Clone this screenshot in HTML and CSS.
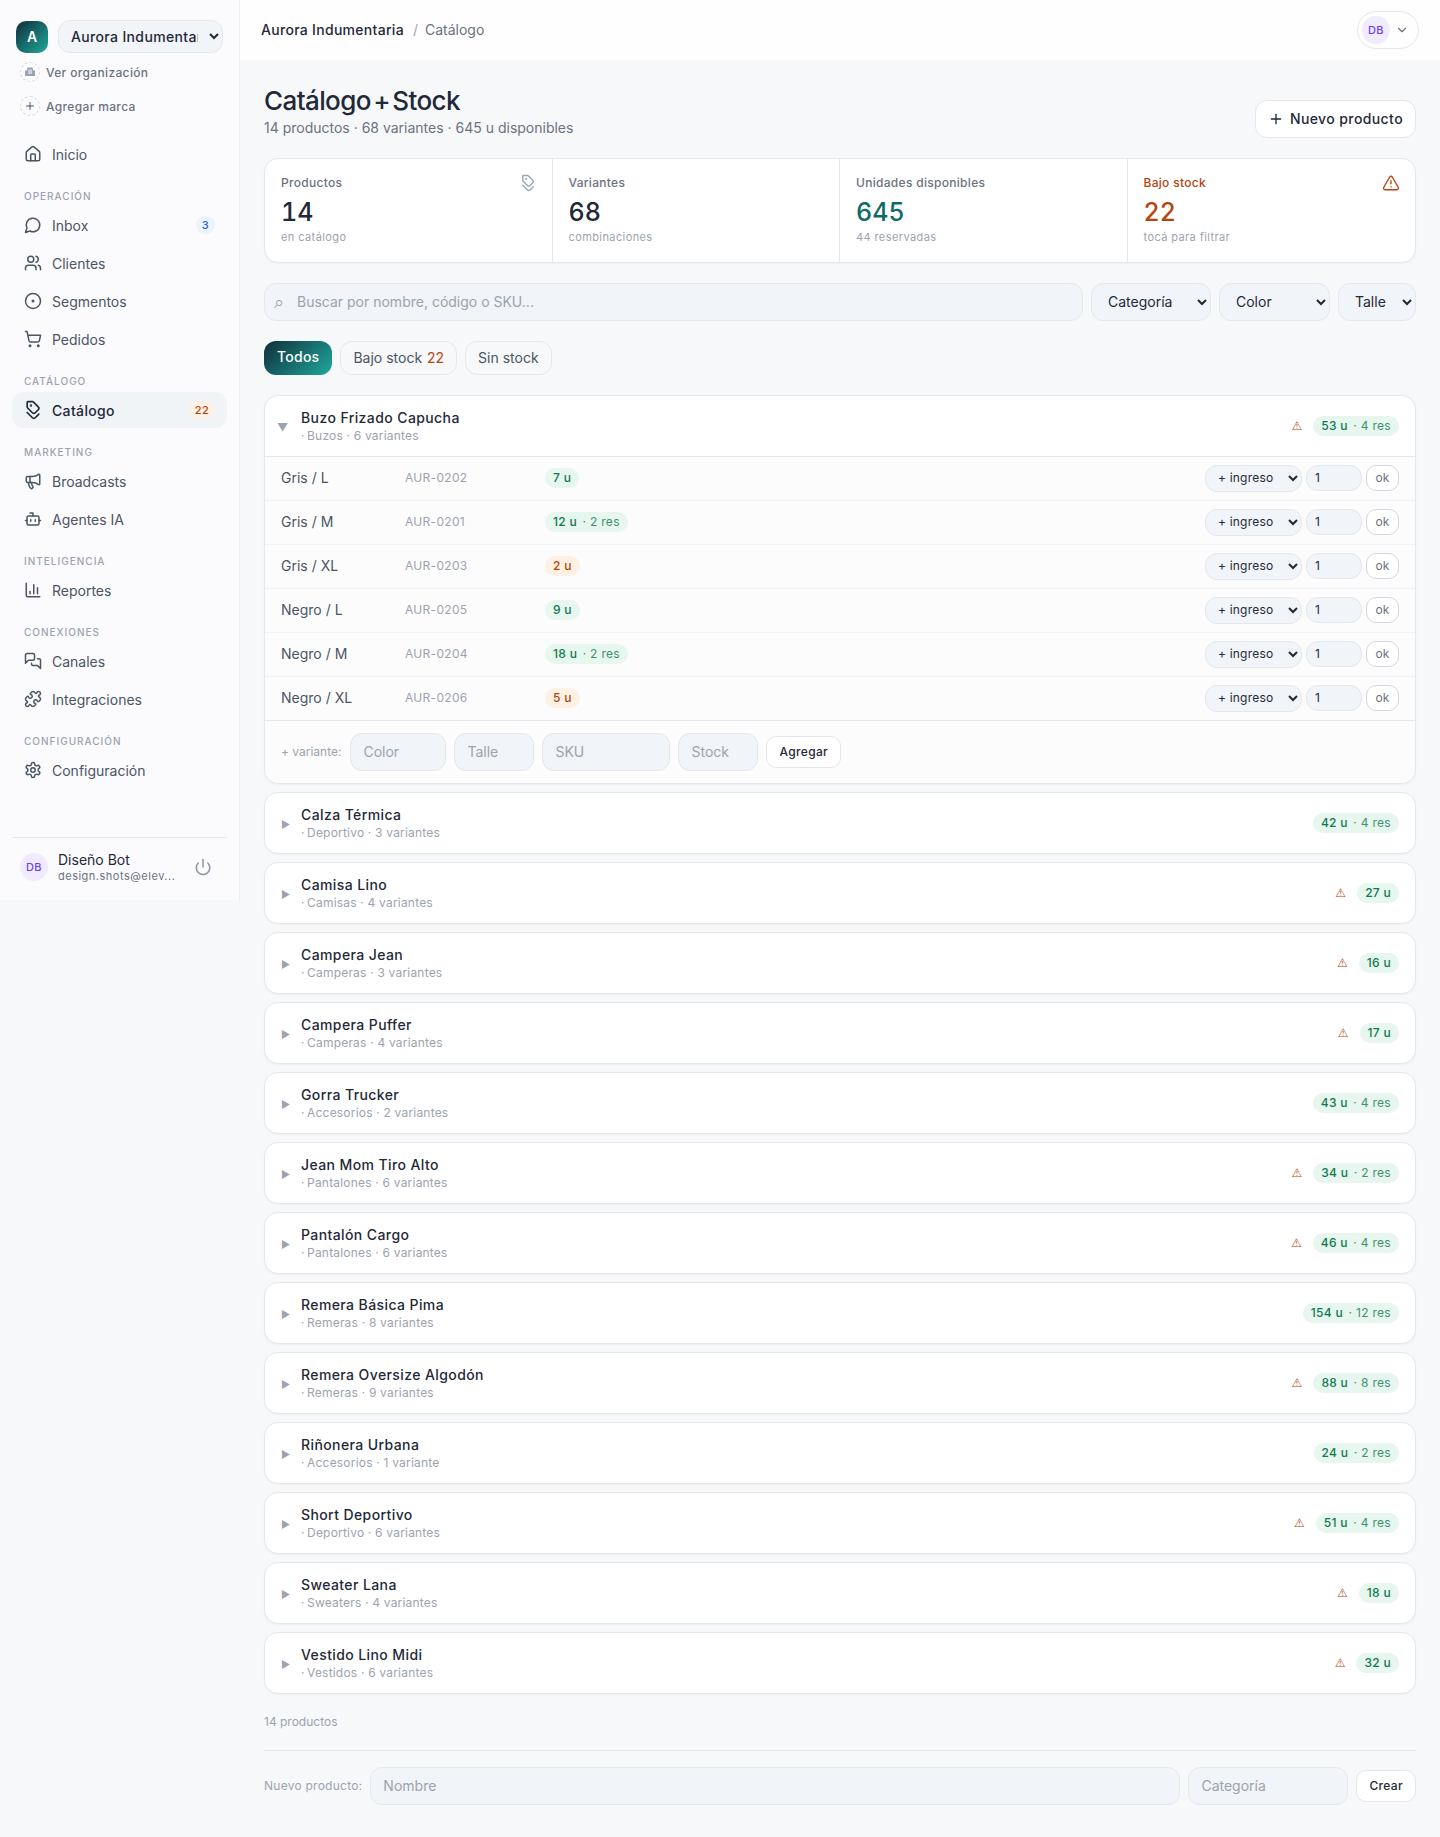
FILE: index.html
```html
<!DOCTYPE html>
<html lang="es">

<head>
    <meta charset="UTF-8">
    <meta name="viewport" content="width=device-width, initial-scale=1.0">
    <title>Catálogo + Stock</title>
    <link rel="stylesheet" href="styles.css">
</head>

<body>

    <svg class="sprite" width="0" height="0">
        <symbol id="i-home" viewBox="0 0 24 24"><path d="M15 21v-8a1 1 0 0 0-1-1h-4a1 1 0 0 0-1 1v8"/><path d="M3 10a2 2 0 0 1 .709-1.528l7-5.999a2 2 0 0 1 2.582 0l7 5.999A2 2 0 0 1 21 10v9a2 2 0 0 1-2 2H5a2 2 0 0 1-2-2z"/></symbol>
        <symbol id="i-inbox" viewBox="0 0 24 24"><path d="M7.9 20A9 9 0 1 0 4 16.1L2 22Z"/></symbol>
        <symbol id="i-users" viewBox="0 0 24 24"><path d="M16 21v-2a4 4 0 0 0-4-4H6a4 4 0 0 0-4 4v2"/><circle cx="9" cy="7" r="4"/><path d="M22 21v-2a4 4 0 0 0-3-3.87"/><path d="M16 3.13a4 4 0 0 1 0 7.75"/></symbol>
        <symbol id="i-dot" viewBox="0 0 24 24"><circle cx="12" cy="12" r="10"/><circle cx="12" cy="12" r="1"/></symbol>
        <symbol id="i-cart" viewBox="0 0 24 24"><circle cx="8" cy="21" r="1"/><circle cx="19" cy="21" r="1"/><path d="M2.05 2.05h2l2.66 12.42a2 2 0 0 0 2 1.58h9.78a2 2 0 0 0 1.95-1.57l1.65-7.43H5.12"/></symbol>
        <symbol id="i-tags" viewBox="0 0 24 24"><g transform="matrix(0 1 1 0 0 0)"><path d="m15 5 6.3 6.3a2.4 2.4 0 0 1 0 3.4L17 19"/><path d="M9.586 5.586A2 2 0 0 0 8.172 5H3a1 1 0 0 0-1 1v5.172a2 2 0 0 0 .586 1.414L8.29 18.29a2.426 2.426 0 0 0 3.42 0l3.58-3.58a2.426 2.426 0 0 0 0-3.42z"/><circle cx="6.5" cy="9.5" r=".5"/></g></symbol>
        <symbol id="i-mega" viewBox="0 0 24 24"><path d="M11 6a13 13 0 0 0 8.4-2.8A1 1 0 0 1 21 4v12a1 1 0 0 1-1.6.8A13 13 0 0 0 11 14H5a2 2 0 0 1-2-2V8a2 2 0 0 1 2-2z"/><path d="M6 14a12 12 0 0 0 2.4 7.2 2 2 0 0 0 3.2-2.4A8 8 0 0 1 10 14"/><path d="M8 6v8"/></symbol>
        <symbol id="i-bot" viewBox="0 0 24 24"><path d="M12 8V4H8"/><rect width="16" height="12" x="4" y="8" rx="2"/><path d="M2 14h2"/><path d="M20 14h2"/><path d="M15 13v2"/><path d="M9 13v2"/></symbol>
        <symbol id="i-chart" viewBox="0 0 24 24"><path d="M3 3v16a2 2 0 0 0 2 2h16"/><path d="M18 17V9"/><path d="M13 17V5"/><path d="M8 17v-3"/></symbol>
        <symbol id="i-chat" viewBox="0 0 24 24"><path d="M14 9a2 2 0 0 1-2 2H6l-4 4V4a2 2 0 0 1 2-2h8a2 2 0 0 1 2 2z"/><path d="M18 9h2a2 2 0 0 1 2 2v11l-4-4h-6a2 2 0 0 1-2-2v-1"/></symbol>
        <symbol id="i-puzzle" viewBox="0 0 24 24"><path d="M15.39 4.39a1 1 0 0 0 1.68-.474 2.5 2.5 0 1 1 3.014 3.015 1 1 0 0 0-.474 1.68l1.683 1.682a2.414 2.414 0 0 1 0 3.414L19.61 15.39a1 1 0 0 1-1.68-.474 2.5 2.5 0 1 0-3.014 3.015 1 1 0 0 1 .474 1.68l-1.683 1.682a2.414 2.414 0 0 1-3.414 0L8.61 19.61a1 1 0 0 0-1.68.474 2.5 2.5 0 1 1-3.014-3.015 1 1 0 0 0 .474-1.68l-1.683-1.682a2.414 2.414 0 0 1 0-3.414L4.39 8.61a1 1 0 0 1 1.68.474 2.5 2.5 0 1 0 3.014-3.015 1 1 0 0 1-.474-1.68l1.683-1.682a2.414 2.414 0 0 1 3.414 0z"/></symbol>
        <symbol id="i-gear" viewBox="0 0 24 24"><path d="M12.22 2h-.44a2 2 0 0 0-2 2v.18a2 2 0 0 1-1 1.73l-.43.25a2 2 0 0 1-2 0l-.15-.08a2 2 0 0 0-2.73.73l-.22.38a2 2 0 0 0 .73 2.73l.15.1a2 2 0 0 1 1 1.72v.51a2 2 0 0 1-1 1.74l-.15.09a2 2 0 0 0-.73 2.73l.22.38a2 2 0 0 0 2.73.73l.15-.08a2 2 0 0 1 2 0l.43.25a2 2 0 0 1 1 1.73V20a2 2 0 0 0 2 2h.44a2 2 0 0 0 2-2v-.18a2 2 0 0 1 1-1.73l.43-.25a2 2 0 0 1 2 0l.15.08a2 2 0 0 0 2.73-.73l.22-.39a2 2 0 0 0-.73-2.73l-.15-.08a2 2 0 0 1-1-1.74v-.5a2 2 0 0 1 1-1.74l.15-.09a2 2 0 0 0 .73-2.73l-.22-.38a2 2 0 0 0-2.73-.73l-.15.08a2 2 0 0 1-2 0l-.43-.25a2 2 0 0 1-1-1.73V4a2 2 0 0 0-2-2z"/><circle cx="12" cy="12" r="3"/></symbol>
        <symbol id="i-power" viewBox="0 0 24 24"><path d="M12 2v10"/><path d="M18.4 6.6a9 9 0 1 1-12.77.04"/></symbol>
        <symbol id="i-alert" viewBox="0 0 24 24"><path d="m21.73 18-8-14a2 2 0 0 0-3.48 0l-8 14A2 2 0 0 0 4 21h16a2 2 0 0 0 1.73-3"/><path d="M12 9v4"/><path d="M12 17h.01"/></symbol>
        <symbol id="i-plus" viewBox="0 0 24 24"><path d="M5 12h14"/><path d="M12 5v14"/></symbol>
        <symbol id="i-down" viewBox="0 0 24 24"><path d="m6 9 6 6 6-6"/></symbol>
    </svg>

    <div class="app">
        <aside class="sidebar">
            <div class="brand">
                <div class="brand-logo">A</div>
                <select class="brand-select">
                    <option>Aurora Indumentaria</option>
                </select>
            </div>
            <a class="brand-link">
                <span class="dashed">
                    <svg class="org" viewBox="0 0 12 12"><path d="M3.5 1.5h5l.7 3H11v5.5H1V4.5h1.8z"/><rect x="4.6" y="3.5" width="1" height="4.5" fill="#fbfbfe"/><rect x="6.6" y="3.5" width="1" height="4.5" fill="#fbfbfe"/></svg>
                </span>
                Ver organización
            </a>
            <a class="brand-link brand-link-2">
                <span class="dashed"><svg class="ico ico-12"><use href="#i-plus"/></svg></span>
                Agregar marca
            </a>

            <nav class="nav">
                <a class="nav-item"><svg class="ico"><use href="#i-home"/></svg>Inicio</a>

                <div class="nav-label">Operación</div>
                <a class="nav-item"><svg class="ico"><use href="#i-inbox"/></svg>Inbox<span class="count count-blue">3</span></a>
                <a class="nav-item"><svg class="ico"><use href="#i-users"/></svg>Clientes</a>
                <a class="nav-item"><svg class="ico"><use href="#i-dot"/></svg>Segmentos</a>
                <a class="nav-item"><svg class="ico"><use href="#i-cart"/></svg>Pedidos</a>

                <div class="nav-label">Catálogo</div>
                <a class="nav-item active"><svg class="ico"><use href="#i-tags"/></svg>Catálogo<span class="count count-orange">22</span></a>

                <div class="nav-label">Marketing</div>
                <a class="nav-item"><svg class="ico"><use href="#i-mega"/></svg>Broadcasts</a>
                <a class="nav-item"><svg class="ico"><use href="#i-bot"/></svg>Agentes IA</a>

                <div class="nav-label">Inteligencia</div>
                <a class="nav-item"><svg class="ico"><use href="#i-chart"/></svg>Reportes</a>

                <div class="nav-label">Conexiones</div>
                <a class="nav-item"><svg class="ico"><use href="#i-chat"/></svg>Canales</a>
                <a class="nav-item"><svg class="ico"><use href="#i-puzzle"/></svg>Integraciones</a>

                <div class="nav-label">Configuración</div>
                <a class="nav-item"><svg class="ico"><use href="#i-gear"/></svg>Configuración</a>
            </nav>

            <div class="user">
                <div class="avatar">DB</div>
                <div class="user-info">
                    <div class="user-name">Diseño Bot</div>
                    <div class="user-mail">design.shots@elev...</div>
                </div>
                <svg class="ico power"><use href="#i-power"/></svg>
            </div>
        </aside>

        <div class="content">
            <header class="topbar">
                <div class="crumbs"><b>Aurora Indumentaria</b><i>/</i><span>Catálogo</span></div>
                <div class="account">
                    <div class="avatar">DB</div>
                    <svg class="ico ico-14"><use href="#i-down"/></svg>
                </div>
            </header>

            <main class="main">
                <div class="page-head">
                    <div>
                        <h1>Catálogo + Stock</h1>
                        <p>14 productos · 68 variantes · 645 u disponibles</p>
                    </div>
                    <button class="btn-new"><svg class="ico ico-16"><use href="#i-plus"/></svg>Nuevo producto</button>
                </div>

                <section class="stats">
                    <div class="stat">
                        <svg class="ico stat-ico"><use href="#i-tags"/></svg>
                        <div class="stat-label">Productos</div>
                        <div class="stat-value">14</div>
                        <div class="stat-sub">en catálogo</div>
                    </div>
                    <div class="stat">
                        <div class="stat-label">Variantes</div>
                        <div class="stat-value">68</div>
                        <div class="stat-sub">combinaciones</div>
                    </div>
                    <div class="stat">
                        <div class="stat-label">Unidades disponibles</div>
                        <div class="stat-value teal">645</div>
                        <div class="stat-sub">44 reservadas</div>
                    </div>
                    <div class="stat">
                        <svg class="ico stat-ico orange"><use href="#i-alert"/></svg>
                        <div class="stat-label orange">Bajo stock</div>
                        <div class="stat-value orange">22</div>
                        <div class="stat-sub">tocá para filtrar</div>
                    </div>
                </section>

                <div class="filters">
                    <div class="search">
                        <span class="search-ico">⌕</span>
                        <input class="field search-input" placeholder="Buscar por nombre, código o SKU...">
                    </div>
                    <select class="field sel-cat"><option>Categoría</option></select>
                    <select class="field sel-color"><option>Color</option></select>
                    <select class="field sel-talle"><option>Talle</option></select>
                </div>

                <div class="chips">
                    <button class="chip chip-on">Todos</button>
                    <button class="chip">Bajo stock <em>22</em></button>
                    <button class="chip">Sin stock</button>
                </div>

                <div class="list">
                    <article class="product">
                        <div class="product-head">
                            <span class="arrow arrow-open">▼</span>
                            <div class="product-title">
                                <div class="product-name">Buzo Frizado Capucha</div>
                                <div class="product-sub">·&thinsp;Buzos · 6 variantes</div>
                            </div>
                            <span class="warn">⚠</span>
                            <span class="pill">53 u <small>· 4 res</small></span>
                        </div>

                        <div class="variant">
                            <span class="v-name">Gris / L</span><span class="v-sku">AUR-0202</span>
                            <span class="v-stock"><span class="pill">7 u</span></span>
                            <select class="field mini-sel"><option>+ ingreso</option></select><input class="field mini-qty" value="1"><button class="btn-ok">ok</button>
                        </div>
                        <div class="variant">
                            <span class="v-name">Gris / M</span><span class="v-sku">AUR-0201</span>
                            <span class="v-stock"><span class="pill">12 u <small>· 2 res</small></span></span>
                            <select class="field mini-sel"><option>+ ingreso</option></select><input class="field mini-qty" value="1"><button class="btn-ok">ok</button>
                        </div>
                        <div class="variant">
                            <span class="v-name">Gris / XL</span><span class="v-sku">AUR-0203</span>
                            <span class="v-stock"><span class="pill pill-low">2 u</span></span>
                            <select class="field mini-sel"><option>+ ingreso</option></select><input class="field mini-qty" value="1"><button class="btn-ok">ok</button>
                        </div>
                        <div class="variant">
                            <span class="v-name">Negro / L</span><span class="v-sku">AUR-0205</span>
                            <span class="v-stock"><span class="pill">9 u</span></span>
                            <select class="field mini-sel"><option>+ ingreso</option></select><input class="field mini-qty" value="1"><button class="btn-ok">ok</button>
                        </div>
                        <div class="variant">
                            <span class="v-name">Negro / M</span><span class="v-sku">AUR-0204</span>
                            <span class="v-stock"><span class="pill">18 u <small>· 2 res</small></span></span>
                            <select class="field mini-sel"><option>+ ingreso</option></select><input class="field mini-qty" value="1"><button class="btn-ok">ok</button>
                        </div>
                        <div class="variant">
                            <span class="v-name">Negro / XL</span><span class="v-sku">AUR-0206</span>
                            <span class="v-stock"><span class="pill pill-low">5 u</span></span>
                            <select class="field mini-sel"><option>+ ingreso</option></select><input class="field mini-qty" value="1"><button class="btn-ok">ok</button>
                        </div>

                        <div class="add-variant">
                            <span class="form-label">+ variante:</span>
                            <input class="field w-96" placeholder="Color">
                            <input class="field w-80" placeholder="Talle">
                            <input class="field w-128" placeholder="SKU">
                            <input class="field w-80" placeholder="Stock">
                            <button class="btn-small">Agregar</button>
                        </div>
                    </article>

                    <article class="product"><div class="product-head"><span class="arrow">▶</span><div class="product-title"><div class="product-name">Calza Térmica</div><div class="product-sub">·&thinsp;Deportivo · 3 variantes</div></div><span class="pill">42 u <small>· 4 res</small></span></div></article>
                    <article class="product"><div class="product-head"><span class="arrow">▶</span><div class="product-title"><div class="product-name">Camisa Lino</div><div class="product-sub">·&thinsp;Camisas · 4 variantes</div></div><span class="warn">⚠</span><span class="pill">27 u</span></div></article>
                    <article class="product"><div class="product-head"><span class="arrow">▶</span><div class="product-title"><div class="product-name">Campera Jean</div><div class="product-sub">·&thinsp;Camperas · 3 variantes</div></div><span class="warn">⚠</span><span class="pill">16 u</span></div></article>
                    <article class="product"><div class="product-head"><span class="arrow">▶</span><div class="product-title"><div class="product-name">Campera Puffer</div><div class="product-sub">·&thinsp;Camperas · 4 variantes</div></div><span class="warn">⚠</span><span class="pill">17 u</span></div></article>
                    <article class="product"><div class="product-head"><span class="arrow">▶</span><div class="product-title"><div class="product-name">Gorra Trucker</div><div class="product-sub">·&thinsp;Accesorios · 2 variantes</div></div><span class="pill">43 u <small>· 4 res</small></span></div></article>
                    <article class="product"><div class="product-head"><span class="arrow">▶</span><div class="product-title"><div class="product-name">Jean Mom Tiro Alto</div><div class="product-sub">·&thinsp;Pantalones · 6 variantes</div></div><span class="warn">⚠</span><span class="pill">34 u <small>· 2 res</small></span></div></article>
                    <article class="product"><div class="product-head"><span class="arrow">▶</span><div class="product-title"><div class="product-name">Pantalón Cargo</div><div class="product-sub">·&thinsp;Pantalones · 6 variantes</div></div><span class="warn">⚠</span><span class="pill">46 u <small>· 4 res</small></span></div></article>
                    <article class="product"><div class="product-head"><span class="arrow">▶</span><div class="product-title"><div class="product-name">Remera Básica Pima</div><div class="product-sub">·&thinsp;Remeras · 8 variantes</div></div><span class="pill">154 u <small>· 12 res</small></span></div></article>
                    <article class="product"><div class="product-head"><span class="arrow">▶</span><div class="product-title"><div class="product-name">Remera Oversize Algodón</div><div class="product-sub">·&thinsp;Remeras · 9 variantes</div></div><span class="warn">⚠</span><span class="pill">88 u <small>· 8 res</small></span></div></article>
                    <article class="product"><div class="product-head"><span class="arrow">▶</span><div class="product-title"><div class="product-name">Riñonera Urbana</div><div class="product-sub">·&thinsp;Accesorios · 1 variante</div></div><span class="pill">24 u <small>· 2 res</small></span></div></article>
                    <article class="product"><div class="product-head"><span class="arrow">▶</span><div class="product-title"><div class="product-name">Short Deportivo</div><div class="product-sub">·&thinsp;Deportivo · 6 variantes</div></div><span class="warn">⚠</span><span class="pill">51 u <small>· 4 res</small></span></div></article>
                    <article class="product"><div class="product-head"><span class="arrow">▶</span><div class="product-title"><div class="product-name">Sweater Lana</div><div class="product-sub">·&thinsp;Sweaters · 4 variantes</div></div><span class="warn">⚠</span><span class="pill">18 u</span></div></article>
                    <article class="product"><div class="product-head"><span class="arrow">▶</span><div class="product-title"><div class="product-name">Vestido Lino Midi</div><div class="product-sub">·&thinsp;Vestidos · 6 variantes</div></div><span class="warn">⚠</span><span class="pill">32 u</span></div></article>
                </div>

                <div class="total">14 productos</div>

                <div class="new-product">
                    <span class="form-label">Nuevo producto:</span>
                    <input class="field grow" placeholder="Nombre">
                    <input class="field w-160" placeholder="Categoría">
                    <button class="btn-small">Crear</button>
                </div>
            </main>
        </div>
    </div>

</body>

</html>
```

FILE: styles.css
```css
* {
    box-sizing: border-box;
}

body {
    margin: 0;
    background: #f7f8fa;
    color: #1f2937;
    font-family: Inter, "Noto Sans", sans-serif;
    font-size: 14px;
}

.sprite {
    position: absolute;
}

.app {
    display: flex;
    align-items: flex-start;
}

.ico {
    width: 18px;
    height: 18px;
    flex: none;
    fill: none;
    stroke: currentColor;
    stroke-width: 2;
    stroke-linecap: round;
    stroke-linejoin: round;
}

.ico-12 {
    width: 12px;
    height: 12px;
}

.ico-14 {
    width: 14px;
    height: 14px;
}

.ico-16 {
    width: 16px;
    height: 16px;
}

.orange {
    color: #b8430e;
}

.teal {
    color: #0f6b66;
}

/* sidebar */
.sidebar {
    width: 240px;
    height: 900px;
    flex: none;
    display: flex;
    flex-direction: column;
    padding: 20px 12px 0;
    background: #fbfbfe;
    border-right: 1px solid #eceef3;
}

.brand {
    display: flex;
    align-items: center;
    gap: 10px;
    padding: 0 4px;
}

.brand-logo {
    width: 32px;
    height: 32px;
    flex: none;
    display: flex;
    align-items: center;
    justify-content: center;
    border-radius: 10px;
    background: linear-gradient(135deg, #0f2f3a, #1fa89c);
    color: #fff;
    font-weight: 600;
    font-size: 14px;
}

.brand-select {
    width: 165px;
    height: 33px;
    padding: 0 8px;
    border: 1px solid #e5e7eb;
    border-radius: 12px;
    background: #f1f4f8;
    color: #1f2937;
    font-family: inherit;
    font-size: 14px;
    font-weight: 450;
    letter-spacing: .35px;
}

.brand-link {
    display: flex;
    align-items: center;
    gap: 6px;
    height: 20px;
    margin: 9px 0 0 8px;
    color: #6b7280;
    font-size: 12px;
    font-weight: 450;
    letter-spacing: .35px;
}

.brand-link-2 {
    margin-top: 14px;
}

.dashed {
    width: 20px;
    height: 20px;
    display: flex;
    align-items: center;
    justify-content: center;
    border: 1px dashed #d5d8df;
    border-radius: 50%;
    color: #4b5563;
}

.org {
    width: 12px;
    height: 12px;
    fill: #9ca3af;
}

.nav {
    display: flex;
    flex-direction: column;
    margin-top: 20px;
    flex: 1;
}

.nav-item {
    display: flex;
    align-items: center;
    gap: 10px;
    height: 36px;
    margin-bottom: 2px;
    padding: 0 12px;
    border-radius: 12px;
    color: #4b5563;
    font-size: 14px;
}

.nav-item.active {
    background: #f1f4f6;
    color: #1f2937;
    font-weight: 450;
    letter-spacing: .35px;
}

.nav-item.active .ico {
    width: 20px;
    height: 20px;
    margin: 0 -1px;
}

.nav-label {
    height: 12px;
    margin: 16px 0 5px;
    padding-left: 12px;
    color: #9ca3af;
    font-size: 10px;
    line-height: 12px;
    font-weight: 450;
    letter-spacing: 1px;
    text-transform: uppercase;
}

.count {
    min-width: 18px;
    height: 18px;
    margin-left: auto;
    padding: 0 6px;
    border-radius: 9px;
    font-size: 11px;
    font-weight: 500;
    line-height: 18px;
    letter-spacing: .3px;
    text-align: center;
}

.count-blue {
    background: #edf2fd;
    color: #2563eb;
}

.count-orange {
    background: #fdf1e3;
    color: #b8430e;
}

.user {
    display: flex;
    align-items: center;
    gap: 10px;
    height: 63px;
    padding: 0 8px 4px;
    border-top: 1px solid #e5e7eb;
}

.avatar {
    width: 28px;
    height: 28px;
    flex: none;
    display: flex;
    align-items: center;
    justify-content: center;
    border-radius: 50%;
    background: #f0ebff;
    color: #6d3ff2;
    font-size: 11px;
    font-weight: 500;
    letter-spacing: .3px;
}

.user-info {
    flex: 1;
    min-width: 0;
}

.user-name {
    color: #1f2937;
    font-size: 14px;
    line-height: 18px;
}

.user-mail {
    color: #6b7280;
    font-size: 11px;
    line-height: 14px;
    letter-spacing: .5px;
}

.power {
    margin-right: 7px;
    color: #8c94a3;
}

/* top bar */
.content {
    flex: 1;
    min-width: 0;
}

.topbar {
    display: flex;
    align-items: center;
    justify-content: space-between;
    height: 60px;
    padding: 0 21px;
    background: #fefefe;
}

.crumbs {
    display: flex;
    gap: 9px;
    padding-bottom: 1px;
    color: #6b7280;
    font-size: 14px;
}

.crumbs b {
    color: #1f2937;
    font-weight: 450;
    letter-spacing: .3px;
}

.crumbs i {
    margin-right: -2px;
    color: #9ca3af;
    font-style: normal;
}

.account {
    display: flex;
    align-items: center;
    gap: 5px;
    width: 62px;
    height: 38px;
    padding: 0 4px;
    border: 1px solid #e5e7eb;
    border-radius: 19px;
    color: #6b7280;
}

/* main */
.main {
    padding: 24px 24px 32px;
}

.page-head {
    display: flex;
    align-items: flex-end;
    justify-content: space-between;
    margin-bottom: 20px;
}

h1 {
    margin: 1px 0 0;
    color: #1f2937;
    font-size: 26px;
    font-weight: 500;
    line-height: 32px;
    letter-spacing: -.6px;
    word-spacing: -4px;
}

.page-head p {
    margin: 1px 0 0;
    color: #6b7280;
    font-size: 14px;
    line-height: 20px;
}

.btn-new {
    display: flex;
    align-items: center;
    gap: 6px;
    height: 38px;
    padding: 0 12px 1px;
    border: 1px solid #e5e7eb;
    border-radius: 12px;
    background: #fff;
    color: #1f2937;
    font-family: inherit;
    font-size: 14px;
    font-weight: 450;
    letter-spacing: .4px;
}

.stats {
    display: grid;
    grid-template-columns: repeat(4, 1fr);
    height: 105px;
    margin-bottom: 20px;
    border: 1px solid #e5e7eb;
    border-radius: 14px;
    background: #fff;
    box-shadow: 0 1px 2px rgba(0, 0, 0, .04);
}

.stat {
    position: relative;
    padding: 15px 16px;
    border-right: 1px solid #e5e7eb;
}

.stat:last-child {
    border-right: 0;
}

.stat-ico {
    position: absolute;
    top: 15px;
    right: 15px;
    color: #9ca3af;
    stroke-width: 1.8;
}

.stat-ico.orange {
    color: #b8430e;
}

.stat-label {
    color: #6b7280;
    font-size: 12px;
    font-weight: 450;
    line-height: 18px;
    letter-spacing: .3px;
}

.stat-label.orange {
    color: #b8430e;
}

.stat-value {
    margin-top: 5px;
    color: #1f2937;
    font-size: 25px;
    font-weight: 500;
    line-height: 30px;
    font-variant-numeric: tabular-nums;
}

.stat-value.teal {
    color: #0f6b66;
}

.stat-value.orange {
    color: #b8430e;
}

.stat-sub {
    margin-top: 2px;
    color: #9ca3af;
    font-size: 11px;
    line-height: 16px;
    letter-spacing: .4px;
}

/* filters */
.field {
    height: 38px;
    padding: 0 12px 1px;
    border: 1px solid #e5e7eb;
    border-radius: 12px;
    background: #f1f4f8;
    color: #1f2937;
    font-family: inherit;
    font-size: 14px;
}

.field::placeholder {
    color: #9ca3af;
}

.filters {
    display: flex;
    gap: 8px;
    margin-bottom: 20px;
}

.search {
    position: relative;
    flex: 1;
}

.search-input {
    width: 100%;
    padding-left: 32px;
}

.search-ico {
    position: absolute;
    left: 10px;
    top: 8px;
    color: #9ca3af;
    font-family: "DejaVu Sans", sans-serif;
    font-size: 18px;
}

.sel-cat {
    width: 120px;
}

.sel-color {
    width: 111px;
}

.sel-talle {
    width: 78px;
}

.chips {
    display: flex;
    gap: 8px;
    margin-bottom: 20px;
}

.chip {
    height: 34px;
    padding: 0 12px 1px;
    border: 1px solid #e5e7eb;
    border-radius: 12px;
    background: #f7f8fa;
    color: #4b5563;
    font-family: inherit;
    font-size: 14px;
}

.chip em {
    margin-left: 1px;
    color: #b8430e;
    font-style: normal;
}

.chip-on {
    padding: 0 13px 4px;
    border: 0;
    background: linear-gradient(135deg, #0f2f3a, #1fa89c);
    color: #fff;
    font-weight: 450;
    letter-spacing: .25px;
}

/* product list */
.list {
    display: flex;
    flex-direction: column;
    gap: 8px;
}

.product {
    border: 1px solid #e5e7eb;
    border-radius: 14px;
    background: #fff;
    box-shadow: 0 1px 2px rgba(0, 0, 0, .04);
}

.product-head {
    display: flex;
    align-items: center;
    height: 60px;
    padding: 0 16px;
}

.arrow {
    width: 20px;
    flex: none;
    padding-top: 2px;
    color: #9ca3af;
    font-size: 10px;
}

.arrow-open {
    width: 24px;
    margin-left: -4px;
    font-size: 11px;
}

.product-title {
    flex: 1;
    min-width: 0;
}

.product-name {
    color: #1f2937;
    font-size: 14px;
    font-weight: 450;
    line-height: 20px;
    letter-spacing: .4px;
}

.product-sub {
    color: #9ca3af;
    font-size: 12px;
    line-height: 16px;
    letter-spacing: .2px;
}

.warn {
    margin-right: 11px;
    color: #b8430e;
    font-family: "DejaVu Sans", sans-serif;
    font-size: 12px;
}

.pill {
    display: inline-block;
    height: 20px;
    padding: 0 8px;
    border-radius: 10px;
    background: #e7f6ee;
    color: #0f7a4f;
    font-size: 12px;
    font-weight: 500;
    line-height: 20px;
    letter-spacing: .3px;
    white-space: nowrap;
}

.pill small {
    margin-left: 2px;
    font-size: 12px;
    font-weight: 400;
    opacity: .8;
}

.pill-low {
    background: #fdf1e3;
    color: #b8430e;
}

.variant {
    display: flex;
    align-items: center;
    gap: 4px;
    height: 44px;
    padding: 0 16px 1px;
    border-top: 1px solid #f1f2f5;
    background: #fcfcfd;
}

.product-head + .variant {
    border-top-color: #e5e7eb;
}

.v-name {
    width: 120px;
    padding-bottom: 1px;
    color: #4b5563;
    font-size: 14px;
}

.v-sku {
    width: 136px;
    padding-bottom: 1px;
    color: #9ca3af;
    font-size: 12px;
    letter-spacing: .3px;
}

.v-stock {
    flex: 1;
}

.mini-sel {
    width: 97px;
    height: 27px;
    padding: 0 8px 1px;
    font-size: 12px;
    letter-spacing: .2px;
}

.mini-qty {
    width: 56px;
    height: 26px;
    padding: 0 8px 1px;
    font-size: 12px;
}

.btn-ok {
    width: 33px;
    height: 26px;
    padding: 0 0 1px;
    border: 1px solid #d5d8e2;
    border-radius: 10px;
    background: #fff;
    color: #6b7280;
    font-family: inherit;
    font-size: 12px;
}

.add-variant {
    display: flex;
    align-items: center;
    gap: 8px;
    height: 63px;
    padding: 0 16px;
    border-top: 1px solid #e5e7eb;
    border-radius: 0 0 14px 14px;
    background: #fcfcfd;
}

.form-label {
    margin-right: 1px;
    padding-bottom: 1px;
    color: #9ca3af;
    font-size: 12px;
}

.new-product .form-label {
    margin-right: 0;
    letter-spacing: .25px;
}

.w-80 {
    width: 80px;
}

.w-96 {
    width: 96px;
}

.w-128 {
    width: 128px;
}

.w-160 {
    width: 160px;
}

.grow {
    flex: 1;
    min-width: 0;
}

.btn-small {
    height: 32px;
    padding: 0 12px 1px;
    border: 1px solid #e5e7eb;
    border-radius: 10px;
    background: #fff;
    color: #1f2937;
    font-family: inherit;
    font-size: 12px;
    font-weight: 450;
    letter-spacing: .35px;
}

.total {
    margin-top: 19px;
    padding-bottom: 19px;
    border-bottom: 1px solid #e5e7eb;
    color: #9ca3af;
    font-size: 12px;
    line-height: 18px;
}

.new-product {
    display: flex;
    align-items: center;
    gap: 8px;
    margin-top: 16px;
}
```
